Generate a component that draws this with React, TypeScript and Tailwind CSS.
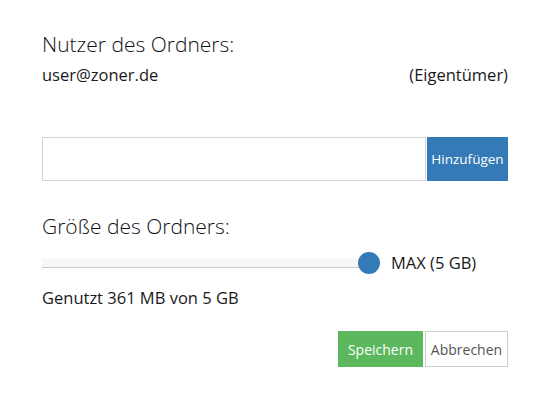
export default function App() {
  return (
    <div className="w-[550px] h-[400px] bg-white text-[#1a1a1a] font-['Open_Sans',sans-serif] px-[42px] pt-[30px]">
      <h2 className="text-[21px] leading-7 font-light text-[#111]">Nutzer des Ordners:</h2>
      <div className="mt-[5px] flex justify-between text-[16.5px] leading-6">
        <span>user@zoner.de</span>
        <span>(Eigentümer)</span>
      </div>

      <div className="mt-[50px] flex h-[44px]">
        <input className="flex-1 border border-[#d4d4d4] outline-none px-3" type="text" />
        <button className="w-[81px] ml-px bg-[#337ab7] text-white text-[13.5px]">Hinzufügen</button>
      </div>

      <h2 className="mt-[31px] text-[21px] leading-7 font-light text-[#111]">Größe des Ordners:</h2>
      <div className="mt-[11px] flex items-center h-[24px]">
        <div className="relative w-[327px] h-[10px] bg-[#f7f7f7] border-b border-[#cccccc]">
          <span className="absolute right-[-11px] top-1/2 -translate-y-1/2 w-[22px] h-[22px] rounded-full bg-[#337ab7]" />
        </div>
        <span className="ml-[22px] text-[16.5px]">MAX (5 GB)</span>
      </div>
      <div className="mt-[11px] text-[16.5px] leading-6">Genutzt 361 MB von 5 GB</div>

      <div className="mt-[21px] flex justify-end gap-[2px]">
        <button className="w-[85px] h-[36px] bg-[#5cb85c] text-white text-[14px]">Speichern</button>
        <button className="w-[83px] h-[36px] border border-[#cccccc] bg-white text-[#555] text-[14px]">Abbrechen</button>
      </div>
    </div>
  );
}
